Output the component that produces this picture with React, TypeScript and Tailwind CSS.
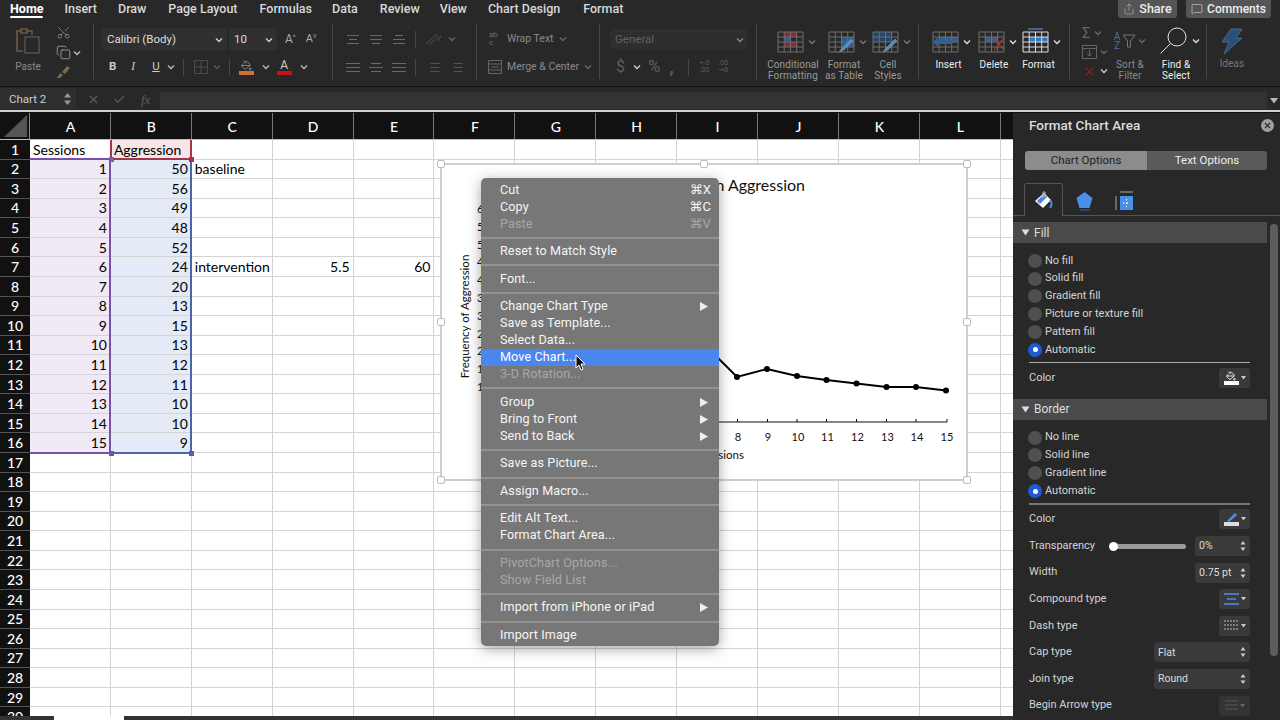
import { Copy, MessageSquare, PaintBucket, Scissors, Share, X, Check } from "lucide-react";

const ui = "font-['Roboto','DejaVu_Sans',sans-serif]";
const cellFont = "font-['Lato','Liberation_Sans',sans-serif]";

const tabs = [
  { name: "Home", ml: "ml-[10px]" },
  { name: "Insert", ml: "ml-[21px]" },
  { name: "Draw", ml: "ml-[21px]" },
  { name: "Page Layout", ml: "ml-[22px]" },
  { name: "Formulas", ml: "ml-[22px]" },
  { name: "Data", ml: "ml-[20px]" },
  { name: "Review", ml: "ml-[22px]" },
  { name: "View", ml: "ml-[20px]" },
  { name: "Chart Design", ml: "ml-[21px]" },
  { name: "Format", ml: "ml-[23px]" },
];

const columns = ["A", "B", "C", "D", "E", "F", "G", "H", "I", "J", "K", "L"];

const cells: Record<number, Record<string, string>> = {
  1: { A: "Sessions", B: "Aggression" },
  2: { A: "1", B: "50", C: "baseline" },
  3: { A: "2", B: "56" },
  4: { A: "3", B: "49" },
  5: { A: "4", B: "48" },
  6: { A: "5", B: "52" },
  7: { A: "6", B: "24", C: "intervention", D: "5.5", E: "60" },
  8: { A: "7", B: "20" },
  9: { A: "8", B: "13" },
  10: { A: "9", B: "15" },
  11: { A: "10", B: "13" },
  12: { A: "11", B: "12" },
  13: { A: "12", B: "11" },
  14: { A: "13", B: "10" },
  15: { A: "14", B: "10" },
  16: { A: "15", B: "9" },
};

const rowNumbers = Array.from({ length: 30 }, (_, i) => i + 1);

type MenuItem = { label?: string; key?: string; off?: boolean; sub?: boolean; active?: boolean; sep?: boolean };

const menu: MenuItem[] = [
  { label: "Cut", key: "⌘X" },
  { label: "Copy", key: "⌘C" },
  { label: "Paste", key: "⌘V", off: true },
  { sep: true },
  { label: "Reset to Match Style" },
  { sep: true },
  { label: "Font..." },
  { sep: true },
  { label: "Change Chart Type", sub: true },
  { label: "Save as Template..." },
  { label: "Select Data..." },
  { label: "Move Chart...", active: true },
  { label: "3-D Rotation...", off: true },
  { sep: true },
  { label: "Group", sub: true },
  { label: "Bring to Front", sub: true },
  { label: "Send to Back", sub: true },
  { sep: true },
  { label: "Save as Picture..." },
  { sep: true },
  { label: "Assign Macro..." },
  { sep: true },
  { label: "Edit Alt Text..." },
  { label: "Format Chart Area..." },
  { sep: true },
  { label: "PivotChart Options...", off: true },
  { label: "Show Field List", off: true },
  { sep: true },
  { label: "Import from iPhone or iPad", sub: true },
  { sep: true },
  { label: "Import Image" },
];

function Chevron({ className = "text-[#bbb]" }: { className?: string }) {
  return (
    <svg className={`shrink-0 ${className}`} width="8" height="6" viewBox="0 0 8 6" fill="none" stroke="currentColor" strokeWidth="1.4">
      <path d="M1 1.5l3 3 3-3" />
    </svg>
  );
}

function Lines({ widths, className = "text-[#6a6a6a]" }: { widths: number[]; className?: string }) {
  return (
    <svg className={`shrink-0 ${className}`} width="14" height="11" viewBox="0 0 14 11" stroke="currentColor" strokeWidth="1">
      {widths.map((w, i) => (
        <path key={i} d={`M${(14 - w) / 2} ${1.5 + i * 4}h${w}`} />
      ))}
    </svg>
  );
}

function TableIcon({ fills, stroke = "#6f6f6f", brush, cross, arrow, topBar }: { fills: [number, number, string][]; stroke?: string; brush?: boolean; cross?: boolean; arrow?: boolean; topBar?: boolean }) {
  return (
    <svg className="shrink-0 overflow-visible" width="27" height="22" viewBox="0 0 27 22" fill="none">
      {fills.map(([x, y, c], i) => (
        <rect key={i} x={x * 6.25 + 1} y={y * 5 + 1} width="6.25" height="5" fill={c} />
      ))}
      <path d="M1 1h25v20H1zM1 6h25M1 11h25M1 16h25M7.2 1v20M13.5 1v20M19.7 1v20" stroke={stroke} strokeWidth="1" />
      {brush && <path d="M11 21l3-4 9-9 2 2-9 9-5 2z" fill="#5a8db8" stroke="#8a8a8a" strokeWidth=".6" />}
      {cross && <path d="M16 7l10 12M26 7L16 19" stroke="#a03a3a" strokeWidth="1.2" />}
      {arrow && <path d="M0 11l6-5v3h14v4H6v3z" fill="#2f5f95" />}
      {topBar && <path d="M6 -2h15" stroke="#3f78b8" strokeWidth="1.5" />}
    </svg>
  );
}

function Group({ className, children }: { className: string; children: React.ReactNode }) {
  return <div className={`h-[55px] shrink-0 border-r border-[#474747] ${className}`}>{children}</div>;
}

function BigItem({ label, label2, width, text, icon, chevron = "text-[#777]" }: { label: string; label2?: string; width: string; text: string; icon: React.ReactNode; chevron?: string }) {
  return (
    <div className={`flex flex-col items-center shrink-0 ${width}`}>
      <div className="h-[33px] shrink-0 pt-[2px] flex items-center gap-[4px] pl-[6px]">
        {icon}
        <Chevron className={chevron} />
      </div>
      <div className={`text-[10px] tracking-[0.1px] leading-[11px] text-center mt-[2px] whitespace-nowrap ${text}`}>
        {label}
        {label2 && <br />}
        {label2}
      </div>
    </div>
  );
}

function Ribbon() {
  return (
    <div className="flex h-[68px] pt-[6px] bg-[#282828] shrink-0">
      {/* clipboard */}
      <Group className="w-[94px] flex">
        <div className="w-[56px] flex flex-col items-center pt-[3px]">
          <svg width="27" height="28" viewBox="0 0 27 28" fill="none" stroke="#6e5a42" strokeWidth="1.6">
            <path d="M7 4H2v20h6M17 8V4h-5M6 2h6v4H6z" />
            <rect x="10" y="10" width="14" height="16" stroke="#666" strokeWidth="1" />
          </svg>
          <span className="text-[10px] text-[#8a8a8a] mt-[6px] leading-[12px]">Paste</span>
        </div>
        <div className="flex flex-col items-start gap-[5px] pt-[1px]">
          <Scissors className="text-[#8fa7bd] -rotate-90" size={15} strokeWidth={1} />
          <div className="flex items-center gap-[2px]">
            <Copy className="text-[#ccc]" size={15} strokeWidth={1} />
            <Chevron />
          </div>
          <svg width="15" height="14" viewBox="0 0 15 14">
            <path d="M1 13l3-5 3 2-3 3zM6 7l5-6 3 2-5 6z" fill="#7a6a4a" />
          </svg>
        </div>
      </Group>

      {/* font */}
      <Group className="w-[239px] flex flex-col">
        <div className="flex items-center h-[22px] mt-[4px]">
          <div className="ml-[8px] w-[125px] h-[22px] rounded-[3px] bg-[#303030] flex items-center justify-between pl-[5px] pr-[4px] pt-[1px]">
            <span className="text-[11.5px] text-[#ddd]">Calibri (Body)</span>
            <Chevron className="text-[#ccc]" />
          </div>
          <div className="ml-[2px] w-[48px] h-[22px] rounded-[3px] bg-[#303030] flex items-center justify-between pl-[5px] pr-[4px] pt-[1px]">
            <span className="text-[11.5px] text-[#ddd]">10</span>
            <Chevron className="text-[#ccc]" />
          </div>
          <span className="ml-[8px] text-[12px] text-[#aaa]">A<sup className="text-[7px]">^</sup></span>
          <span className="ml-[10px] text-[11px] text-[#aaa]">A<sup className="text-[7px] text-[#7fa7d0]">v</sup></span>
        </div>
        <div className="flex items-center h-[20px] mt-[7px] text-[#ccc]">
          <span className="ml-[15px] text-[11.5px] font-bold">B</span>
          <span className="ml-[15px] text-[11.5px] italic font-['Liberation_Serif',serif]">I</span>
          <span className="ml-[17px] text-[11.5px] underline">U</span>
          <span className="ml-[7px]"><Chevron /></span>
          <div className="ml-[8px] w-px h-[17px] bg-[#474747]" />
          <svg className="ml-[10px]" width="14" height="14" viewBox="0 0 14 14" stroke="#4c4c4c" fill="none"><path d="M.5.5h13v13H.5zM7 .5v13M.5 7h13" /></svg>
          <span className="ml-[5px]"><Chevron className="text-[#5a5a5a]" /></span>
          <div className="ml-[8px] w-px h-[17px] bg-[#474747]" />
          <div className="ml-[9px] flex flex-col items-center w-[15px]">
            <PaintBucket className="text-[#ccc]" size={11} strokeWidth={1.2} />
            <div className="w-[15px] h-[4px] bg-[#d0703a]" />
          </div>
          <span className="ml-[8px]"><Chevron /></span>
          <div className="ml-[7px] flex flex-col items-center w-[15px] leading-[11px]">
            <span className="text-[12px] leading-[11px]">A</span>
            <div className="w-[15px] h-[4px] bg-[#c4141b]" />
          </div>
          <span className="ml-[8px]"><Chevron /></span>
        </div>
      </Group>

      {/* alignment */}
      <Group className="w-[144px] flex flex-col">
        <div className="flex items-center h-[22px] mt-[4px] pl-[13px] gap-[9px]">
          <Lines widths={[12, 8, 12]} />
          <Lines widths={[12, 12, 8]} />
          <Lines widths={[8, 12, 12]} />
          <div className="w-px h-[17px] bg-[#474747]" />
          <svg width="17" height="14" viewBox="0 0 17 14" fill="none" stroke="#555"><path d="M1 12L12 2M4 13l10-9" /><path d="M13 9l3-5" stroke="#355a80" /></svg>
          <Chevron className="text-[#666] -ml-[3px]" />
        </div>
        <div className="flex items-center h-[20px] mt-[7px] pl-[13px] gap-[9px]">
          <Lines widths={[14, 14, 14]} />
          <Lines widths={[10, 14, 10]} />
          <Lines widths={[14, 14, 14]} />
          <div className="w-px h-[17px] bg-[#474747]" />
          <Lines widths={[9, 9, 9]} className="text-[#355a80] ml-[3px]" />
          <Lines widths={[9, 9, 9]} className="text-[#355a80]" />
        </div>
      </Group>

      {/* wrap and merge */}
      <Group className="w-[123px] flex flex-col text-[#8a8a8a] text-[10.5px]">
        <div className="flex items-center h-[22px] mt-[4px] pl-[12px] gap-[5px]">
          <span className="w-[13px] text-[8px] leading-[8px] text-[#6d6d6d]">ab<br />c</span>
          <span className="whitespace-nowrap">Wrap Text</span>
          <Chevron className="text-[#666]" />
        </div>
        <div className="flex items-center h-[20px] mt-[7px] pl-[11px] gap-[5px]">
          <svg width="14" height="14" viewBox="0 0 14 14" stroke="#666" fill="none"><path d="M.5.5h13v13H.5zM.5 4h13M.5 10h13M3 7h8" /></svg>
          <span className="whitespace-nowrap">Merge &amp; Center</span>
          <Chevron className="text-[#666]" />
        </div>
      </Group>

      {/* number */}
      <Group className="w-[157px] flex flex-col">
        <div className="flex items-center h-[22px] mt-[4px]">
          <div className="ml-[10px] w-[137px] h-[20px] rounded-[3px] bg-[#2e2e2e] flex items-center justify-between pl-[5px] pr-[3px] pt-[1px]">
            <span className="text-[11.5px] text-[#626262]">General</span>
            <Chevron className="text-[#888]" />
          </div>
        </div>
        <div className="flex items-center h-[20px] mt-[7px] text-[#5f5f5f]">
          <span className="ml-[16px] text-[16px]">$</span>
          <span className="ml-[8px]"><Chevron className="text-[#ccc]" /></span>
          <span className="ml-[7px] text-[17px]">%</span>
          <span className="ml-[9px] text-[17px] font-bold leading-[14px]">,</span>
          <div className="ml-[14px] w-px h-[17px] bg-[#474747]" />
          <span className="ml-[11px] text-[7px] leading-[7px] text-center">←0<br />.00</span>
          <span className="ml-[9px] text-[7px] leading-[7px] text-center">.00<br />→0</span>
        </div>
      </Group>

      {/* styles */}
      <Group className="w-[162px] flex">
        <BigItem width="w-[66px] pl-[6px]" label="Conditional" label2="Formatting" text="text-[#9a9a9a]" icon={<TableIcon fills={[[1, 0, "#8a2a32"], [2, 0, "#8a2a32"], [1, 1, "#2d5c94"], [1, 2, "#8a2a32"], [2, 2, "#8a2a32"]]} />} />
        <BigItem width="w-[42px]" label="Format" label2="as Table" text="text-[#9a9a9a]" icon={<TableIcon fills={[[2, 1, "#2d5c94"], [3, 1, "#2d5c94"], [2, 2, "#2d5c94"], [3, 2, "#2d5c94"]]} brush />} />
        <BigItem width="w-[46px]" label="Cell" label2="Styles" text="text-[#9a9a9a]" icon={<TableIcon fills={[[0, 0, "#24466e"], [1, 0, "#24466e"], [2, 0, "#24466e"], [0, 1, "#24466e"], [1, 1, "#24466e"], [2, 1, "#24466e"]]} brush />} />
      </Group>

      {/* cells */}
      <Group className="w-[151px] flex pl-[6px]">
        <BigItem width="w-[47px]" label="Insert" text="text-[#eee]" chevron="text-[#ddd]" icon={<TableIcon fills={[[1, 1, "#2f5f95"], [2, 1, "#2f5f95"], [3, 1, "#2f5f95"]]} arrow />} />
        <BigItem width="w-[44px]" label="Delete" text="text-[#eee]" chevron="text-[#ddd]" icon={<TableIcon fills={[[1, 1, "#2f5f95"], [2, 1, "#2f5f95"]]} cross />} />
        <BigItem width="w-[45px]" label="Format" text="text-[#eee]" chevron="text-[#ddd]" icon={<TableIcon stroke="#ddd" topBar fills={[[1, 1, "#2a78c8"], [2, 1, "#2a78c8"], [3, 1, "#2a78c8"]]} />} />
      </Group>

      {/* editing */}
      <Group className="w-[137px] flex">
        <div className="w-[38px] flex flex-col pl-[12px] pt-[1px] gap-[3px]">
          <div className="flex items-center gap-[3px] h-[16px]"><span className="text-[15px] text-[#666]">Σ</span><Chevron className="text-[#666]" /></div>
          <div className="flex items-center gap-[3px] h-[16px]">
            <svg width="15" height="14" viewBox="0 0 15 14" stroke="#666" fill="none"><path d="M.5.5h14v13H.5zM.5 3.5h14M7.5 5v6M5 8.5l2.5 2.5L10 8.500" /></svg>
            <Chevron className="text-[#666]" />
          </div>
          <div className="flex items-center gap-[3px] h-[16px]"><X className="text-[#b83a3a]" size={15} strokeWidth={1} /><Chevron className="text-[#ccc]" /></div>
        </div>
        <div className="w-[46px] flex flex-col items-center">
          <div className="h-[33px] shrink-0 flex items-center gap-[2px]">
            <span className="text-[10px] leading-[9px] text-[#4f6f90] text-center">A<br />Z</span>
            <svg width="14" height="14" viewBox="0 0 14 14" stroke="#777" fill="none"><path d="M1 1h12L8.500 7v6h-3V7z" /></svg>
            <Chevron className="text-[#666]" />
          </div>
          <div className="text-[10px] tracking-[0.1px] leading-[11px] text-center mt-[2px] text-[#8a8a8a]">Sort &amp;<br />Filter</div>
        </div>
        <div className="flex-1 flex flex-col items-center pr-[6px]">
          <div className="h-[33px] shrink-0 flex items-center gap-[4px] pl-[8px]">
            <svg width="28" height="28" viewBox="0 0 28 28" fill="none" stroke="#e4e4e4" strokeWidth="1">
              <circle cx="17" cy="10" r="9" />
              <path d="M10.500 16.500L.5 26.500" />
            </svg>
            <Chevron className="text-[#ddd]" />
          </div>
          <div className="text-[10px] tracking-[0.1px] leading-[11px] text-center mt-[2px] text-[#eee]">Find &amp;<br />Select</div>
        </div>
      </Group>

      {/* ideas */}
      <div className="w-[50px] flex flex-col items-center">
        <svg className="mt-[4px]" width="22" height="27" viewBox="0 0 22 27" fill="#2a4f78" stroke="#5d86b0" strokeWidth=".6"><path d="M10 1h11l-6 9h6L3 26l5-12H1z" /></svg>
        <span className="text-[10px] text-[#777] mt-[3px] leading-[12px]">Ideas</span>
      </div>
    </div>
  );
}

function FormulaBar() {
  return (
    <div className="flex items-end h-[24px] bg-[#282828] border-t border-[#141414] shrink-0 pb-[1px]">
      <div className="w-[76px] h-[21px] bg-[#2f2f2f] flex items-center justify-between pl-[9px] pr-[4px]">
        <span className="text-[11.5px] text-[#ccc] pt-[2px]">Chart 2</span>
        <svg width="9" height="14" viewBox="0 0 9 14" fill="#999"><path d="M4.500 1l3.500 4.500H1zM4.500 13L8 8.500H1z" /></svg>
      </div>
      <div className="flex items-center w-[84px] h-[21px] pl-[11px] gap-[13px] pt-[2px]">
        <X className="text-[#5f5f5f]" size={13} strokeWidth={2} />
        <Check className="text-[#5f5f5f]" size={13} strokeWidth={2} />
        <span className="ml-[2px] text-[13px] italic text-[#5f5f5f] font-['Liberation_Serif',serif]">fx</span>
      </div>
      <div className="w-[1107px] h-[17px] bg-[#333333]" />
      <svg className="ml-[2px] mb-[5px]" width="10" height="7" viewBox="0 0 10 7" fill="#bbb"><path d="M1 1h8L5 6.500z" /></svg>
    </div>
  );
}

function Sheet() {
  return (
    <div className={`w-[1013px] shrink-0 flex flex-col overflow-hidden ${cellFont}`}>
      <div className="flex h-[27px] bg-[#111111] shrink-0 border-b border-[#bbb]">
        <div className="w-[30px] shrink-0 border-r border-[#888] flex items-end justify-end pr-[2px] pb-[2px]">
          <svg width="23" height="22" viewBox="0 0 23 22" fill="#555"><path d="M23 0v22H0z" /></svg>
        </div>
        {columns.map((c) => (
          <div key={c} className="w-[80.9px] shrink-0 border-r border-[#777] flex items-center justify-center pl-[1px] text-white text-[14px] font-medium">{c}</div>
        ))}
      </div>
      <div className="relative flex-1 overflow-hidden bg-white">
        {rowNumbers.map((r) => (
          <div key={r} className="flex h-[19.57px]">
            <div className="w-[30px] shrink-0 bg-[#111111] border-b border-[#555] flex items-center justify-center text-white text-[14px] font-medium">{r}</div>
            {columns.map((c) => {
              const v = cells[r]?.[c];
              const isNum = v !== undefined && /^[\d.]+$/.test(v);
              const tint =
                r >= 2 && r <= 16 && c === "A" ? "bg-[#f1e9f5]" :
                r >= 2 && r <= 16 && c === "B" ? "bg-[#e4eaf6]" :
                r === 1 && c === "B" ? "bg-[#f8e5e5]" : "bg-white";
              return (
                <div
                  key={c}
                  className={`w-[80.9px] shrink-0 border-r border-b border-[#d4d4d4] px-[3px] flex items-center text-[14px] text-black whitespace-nowrap ${isNum ? "justify-end" : "justify-start"} ${tint}`}
                >
                  {v}
                </div>
              );
            })}
            <div className="flex-1 border-b border-[#d4d4d4]" />
          </div>
        ))}

        {/* range highlights */}
        <div className="absolute left-[30px] top-[18px] w-[80.500px] h-[296px] border-t-2 border-r-2 border-b-2 border-[#7a4fa8]" />
        <div className="absolute left-[111px] top-[20px] w-[81px] h-[294px] border-r-2 border-b-2 border-[#4a66a8]" />
        <div className="absolute left-[110px] top-0 w-[82px] h-[20px] border-l-2 border-r-2 border-b-2 border-[#a53446]" />
        <div className="absolute left-[109px] top-[17px] w-[5px] h-[5px] bg-[#7a5cc0]" />
        <div className="absolute left-[189px] top-[17px] w-[5px] h-[5px] bg-[#a53446]" />
        <div className="absolute left-[189px] top-[311px] w-[5px] h-[5px] bg-[#4a66a8]" />
        <div className="absolute left-[109px] top-[311px] w-[5px] h-[5px] bg-[#7a4fa8]" />
      </div>
      <div className="flex h-[4px] shrink-0 bg-[#333]">
        <div className="ml-[54px] w-[70px] bg-white" />
      </div>
    </div>
  );
}

function Chart() {
  const pts: [number, number][] = [[737, 377], [767, 369], [797, 376], [826.500, 380], [856.500, 383.500], [886.500, 387], [916, 387], [946, 390.500]];
  const handles: [number, number][] = [[441, 164], [704, 164], [967, 164], [441, 322], [967, 322], [441, 480], [704, 480], [967, 480]];
  const yTicks = ["60", "55", "50", "45", "40", "35", "30", "25", "20", "15", "10"];
  return (
    <svg className="absolute left-[436px] top-[159px] overflow-visible" width="537" height="327" viewBox="436 159 537 327" style={{ fontFamily: "Lato, sans-serif" }}>
      <rect x="441" y="164" width="526" height="316" fill="#fff" stroke="#cfcfcf" strokeWidth="2" />
      <text x="805" y="191" textAnchor="end" fontSize="16" fill="#111">n Aggression</text>
      <text x="469" y="316.500" textAnchor="middle" fontSize="11.500" fill="#111" transform="rotate(-90 469 316.500)">Frequency of Aggression</text>
      {yTicks.map((t, i) => (
        <text key={t} x="477" y={213 + i * 17.8} fontSize="11" fill="#111">{t}</text>
      ))}
      <path d="M700 422h247M737.500 419v3M767.500 419v3M797 419v3M826.500 419v3M856.500 419v3M886.500 419v3M916 419v3M947 419v3" stroke="#111" fill="none" />
      <polyline points={`700,340 ${pts.map((p) => p.join(",")).join(" ")}`} fill="none" stroke="#000" strokeWidth="2" />
      {pts.map(([x, y]) => (
        <circle key={x} cx={x} cy={y} r="3" fill="#000" />
      ))}
      {["8", "9", "10", "11", "12", "13", "14", "15"].map((t, i) => (
        <text key={t} x={pts[i][0] + 1} y="441" textAnchor="middle" fontSize="11" fill="#111">{t}</text>
      ))}
      <text x="744" y="459" textAnchor="end" fontSize="11.500" fill="#111">Sessions</text>
      {handles.map(([x, y]) => (
        <rect key={`${x}-${y}`} x={x - 3.500} y={y - 3.500} width="7" height="7" rx="1.500" fill="#fff" stroke="#bdbdbd" />
      ))}
    </svg>
  );
}

function ContextMenu() {
  return (
    <div className={`absolute left-[481px] top-[178px] w-[238px] h-[468px] rounded-[5px] bg-[#777777] shadow-[0_3px_14px_rgba(0,0,0,0.35)] pt-[3.5px] ${ui}`}>
      {menu.map((m, i) =>
        m.sep ? (
          <div key={i} className="h-[10.55px] flex items-center">
            <div className="w-full h-[2px] bg-[#929292]" />
          </div>
        ) : (
          <div
            key={i}
            className={`h-[17px] pl-[19px] pr-[8px] flex items-center justify-between text-[12.6px] tracking-[0.1px] ${m.active ? "bg-[#4a86ee] text-white" : m.off ? "text-[#a8a8a8]" : "text-[#f5f5f5]"}`}
          >
            <span>{m.label}</span>
            {m.key && <span className="text-[13px]">{m.key}</span>}
            {m.sub && (
              <svg className="mr-[3px]" width="8" height="9" viewBox="0 0 8 9" fill="#eee"><path d="M0 0l8 4.500L0 9z" /></svg>
            )}
          </div>
        )
      )}
    </div>
  );
}

function Radio({ label, on }: { label: string; on?: boolean }) {
  return (
    <div className="h-[17.800px] flex items-center pl-[15px] gap-[3px]">
      <div className={`w-[14px] h-[14px] rounded-full flex items-center justify-center ${on ? "bg-[#1f5bd0]" : "bg-[#4f4f4f]"}`}>
        {on && <div className="w-[5px] h-[5px] rounded-full bg-white" />}
      </div>
      <span className="text-[11px] text-[#d4d4d4] whitespace-nowrap">{label}</span>
    </div>
  );
}

function SectionHead({ label }: { label: string }) {
  return (
    <div className="h-[21px] bg-[#4a4a4a] flex items-center pl-[8px] gap-[4px] text-[12px] text-[#ddd]">
      <svg width="9" height="7" viewBox="0 0 9 7" fill="#ddd"><path d="M.5.500h8L4.500 6.500z" /></svg>
      {label}
    </div>
  );
}

function IconButton({ children }: { children: React.ReactNode }) {
  return (
    <div className="w-[31px] h-[20px] rounded-[3px] bg-[#3a3a3a] flex items-center justify-center gap-[2px]">
      {children}
      <svg width="5" height="4" viewBox="0 0 5 4" fill="#ccc"><path d="M0 0h5L2.500 3.500z" /></svg>
    </div>
  );
}

function Stepper() {
  return (
    <svg width="6" height="12" viewBox="0 0 6 12" fill="#ccc"><path d="M3 1l2.500 3.500h-5zM3 11L.500 7.500h5z" /></svg>
  );
}

function OptionRow({ label, children }: { label: string; children?: React.ReactNode }) {
  return (
    <div className="h-[19px] mb-[7.600px] flex items-center justify-between pl-[16px] pr-[17px]">
      <span className="text-[11px] text-[#d4d4d4] whitespace-nowrap">{label}</span>
      {children}
    </div>
  );
}

function ValueBox({ value, width }: { value: string; width: string }) {
  return (
    <div className={`${width} h-[20px] rounded-[3px] bg-[#3a3a3a] flex items-center justify-between pl-[4px] pr-[4px] text-[10.500px] text-[#ddd]`}>
      <span>{value}</span>
      <Stepper />
    </div>
  );
}

function Sidebar() {
  return (
    <div className={`w-[267px] shrink-0 bg-[#282828] flex flex-col overflow-hidden ${ui}`}>
      <div className="h-[25px] shrink-0 flex items-center justify-between pl-[16px] pr-[6px]">
        <span className="text-[13.500px] text-[#dcdcdc] font-medium">Format Chart Area</span>
        <div className="w-[13px] h-[13px] rounded-full bg-[#a0a0a0] flex items-center justify-center">
          <X className="text-[#282828]" size={9} strokeWidth={3} />
        </div>
      </div>
      <div className="mt-[13px] ml-[12px] w-[242px] h-[19px] shrink-0 rounded-[3px] overflow-hidden flex text-[11.500px]">
        <div className="w-[122px] bg-[#8c8c8c] text-[#1e1e1e] flex items-center justify-center">Chart Options</div>
        <div className="flex-1 bg-[#5a5a5a] text-[#eee] flex items-center justify-center">Text Options</div>
      </div>
      <div className="mt-[14px] h-[32px] shrink-0 flex items-end border-b border-[#555]">
        <div className="ml-[11px] w-[39px] h-[33px] -mb-px border border-b-0 border-[#555] rounded-t-[3px] bg-[#282828] flex items-center justify-center pt-[3px]">
          <svg width="20" height="21" viewBox="0 0 20 21">
            <path d="M10 2l7 7-8 8-8-7z" fill="#fff" />
            <path d="M3 10l7-7 3 3-7 7z" fill="#4a88e0" />
            <path d="M9 7V1h2v5" stroke="#bbb" fill="none" />
            <path d="M16 9c2 2 2 5 0 8" stroke="#4a88e0" strokeWidth="2" fill="none" />
          </svg>
        </div>
        <div className="ml-[13px] mb-[3px]">
          <svg width="17" height="21" viewBox="0 0 17 21">
            <path d="M8.500 1l8 6-3 10h-10l-3-10z" fill="#4a90e8" />
            <path d="M3 18h11l-1 2H4z" fill="#27496e" />
          </svg>
        </div>
        <div className="ml-[22px] mb-[4px]">
          <svg width="19" height="20" viewBox="0 0 19 20">
            <path d="M1 5v14M5 1h13" stroke="#aaa" fill="none" />
            <rect x="5" y="5" width="13" height="14" fill="#4a90e8" />
            <path d="M11.500 8v8M8 12h7" stroke="#fff" strokeDasharray="1.500 2" />
          </svg>
        </div>
      </div>
      <div className="flex flex-1 min-h-0 mt-[6px]">
        <div className="w-[254px] shrink-0">
          <SectionHead label="Fill" />
          <div className="pt-[9px]">
            {["No fill", "Solid fill", "Gradient fill", "Picture or texture fill", "Pattern fill"].map((l) => (
              <Radio key={l} label={l} />
            ))}
            <Radio label="Automatic" on />
          </div>
          <div className="ml-[16px] mr-[17px] mt-[3px] h-px bg-[#aaa]" />
          <div className="mt-[5px] mb-[11px]">
            <div className="h-[20px] flex items-center justify-between pl-[16px] pr-[17px]">
              <span className="text-[11px] text-[#d4d4d4]">Color</span>
              <IconButton>
                <div className="flex flex-col items-center">
                  <PaintBucket className="text-[#fff]" size={10} strokeWidth={2} />
                  <div className="w-[15px] h-[4px] bg-white" />
                </div>
              </IconButton>
            </div>
          </div>
          <SectionHead label="Border" />
          <div className="pt-[9px]">
            {["No line", "Solid line", "Gradient line"].map((l) => (
              <Radio key={l} label={l} />
            ))}
            <Radio label="Automatic" on />
          </div>
          <div className="ml-[16px] mr-[17px] mt-[3px] mb-[5px] h-[2px] bg-[#777]" />
          <OptionRow label="Color">
            <IconButton>
              <div className="flex flex-col items-center">
                <svg width="14" height="10" viewBox="0 0 14 10"><path d="M3 9l8-8 2 2-8 7z" fill="#4a90e8" /></svg>
                <div className="w-[15px] h-[4px] bg-[#ddd]" />
              </div>
            </IconButton>
          </OptionRow>
          <OptionRow label="Transparency">
            <div className="flex items-center">
              <div className="relative w-[76px] h-[5px] rounded-full bg-[#999] mr-[9px]">
                <div className="absolute -left-[1px] -top-[2px] w-[9px] h-[9px] rounded-full bg-white" />
              </div>
              <ValueBox value="0%" width="w-[55px]" />
            </div>
          </OptionRow>
          <OptionRow label="Width">
            <ValueBox value="0.75 pt" width="w-[55px]" />
          </OptionRow>
          <OptionRow label="Compound type">
            <IconButton>
              <svg width="15" height="13" viewBox="0 0 15 13" stroke="#4a90e8" strokeWidth="1.500"><path d="M0 1h15M3 6h9M0 11h15" /></svg>
            </IconButton>
          </OptionRow>
          <OptionRow label="Dash type">
            <IconButton>
              <svg width="15" height="11" viewBox="0 0 15 11" stroke="#bbb" strokeDasharray="2 1"><path d="M0 1h15M0 5h15M0 9h15" /></svg>
            </IconButton>
          </OptionRow>
          <OptionRow label="Cap type">
            <ValueBox value="Flat" width="w-[96px]" />
          </OptionRow>
          <OptionRow label="Join type">
            <ValueBox value="Round" width="w-[96px]" />
          </OptionRow>
          <OptionRow label="Begin Arrow type">
            <div className="w-[31px] h-[20px] rounded-[3px] bg-[#343434] flex items-center justify-center gap-[2px]">
              <svg width="13" height="11" viewBox="0 0 13 11" stroke="#3f5d7d"><path d="M0 1h13M0 5h13M0 9h13" /></svg>
              <svg width="5" height="4" viewBox="0 0 5 4" fill="#666"><path d="M0 0h5L2.500 3.500z" /></svg>
            </div>
          </OptionRow>
        </div>
        <div className="ml-[3px] mt-[2px] w-[8px] h-[432px] rounded-full bg-[#5c5c5c]" />
      </div>
    </div>
  );
}

export default function App() {
  return (
    <div className={`relative w-[1280px] h-[720px] overflow-hidden flex flex-col bg-[#282828] ${ui}`}>
      <div className="flex items-start h-[18px] shrink-0 text-[12.500px] text-[#d8d8d8] font-medium">
        {tabs.map((t, i) => (
          <div key={t.name} className={`relative whitespace-nowrap ${t.ml} ${i === 0 ? "text-white font-bold" : ""}`}>
            {t.name}
            {i === 0 && <div className="absolute left-0 right-0 top-[16px] h-[2px] bg-white rounded-full" />}
          </div>
        ))}
        <div className="ml-auto mr-[9px] flex gap-[9px]">
          <div className="w-[59px] h-[18px] rounded-b-[3px] bg-[#555] flex items-center justify-center gap-[4px] text-[#eee]">
            <Share className="text-[#bbb]" size={12} strokeWidth={1.2} />
            Share
          </div>
          <div className="w-[85px] h-[18px] rounded-b-[3px] bg-[#555] flex items-center justify-center gap-[4px] text-[12px] text-[#eee]">
            <MessageSquare className="text-[#ddd]" size={12} strokeWidth={1.2} />
            Comments
          </div>
        </div>
      </div>
      <Ribbon />
      <FormulaBar />
      <div className="h-[2px] bg-[#d0d0d0] shrink-0" />
      <div className="h-px bg-[#111] shrink-0" />
      <div className="flex flex-1 min-h-0">
        <Sheet />
        <Sidebar />
      </div>

      <Chart />
      <ContextMenu />

      {/* pointer */}
      <svg className="absolute left-[575px] top-[354px]" width="12" height="17" viewBox="0 0 12 17">
        <path d="M1 1v13l3-3 2 5 2-1-2-5h4z" fill="#111" stroke="#fff" strokeWidth="1" />
      </svg>
    </div>
  );
}
